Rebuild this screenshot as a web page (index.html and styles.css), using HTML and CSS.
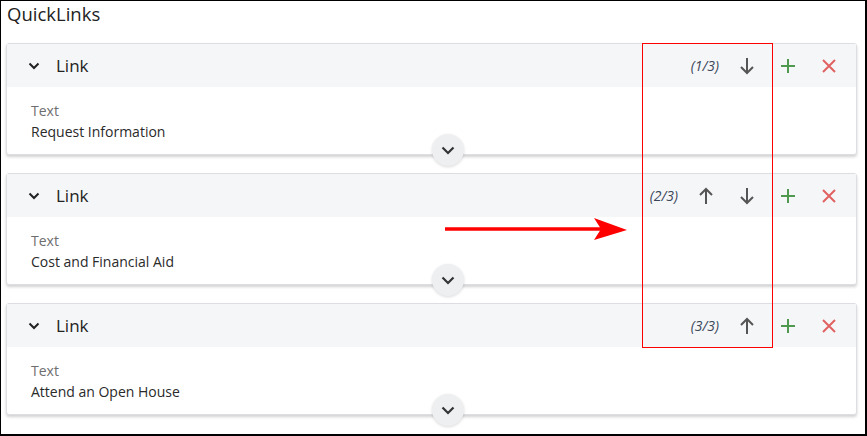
FILE: index.html
```html
<!DOCTYPE html>
<html>
<head>
<title>QuickLinks</title>
<link rel="stylesheet" href="styles.css">
</head>
<body>
<div class="frame">
   <h1 class="title">QuickLinks</h1>

   <div class="card">
      <div class="cardHead">
         <svg class="toggle" width="12" height="8" viewBox="0 0 12 8"><path d="M1.5 1.5 L6 6 L10.5 1.5" fill="none" stroke="#222" stroke-width="2"/></svg>
         <span class="cardName">Link</span>
         <span class="counter">(1/3)</span>
         <span class="btn"><svg width="16" height="18" viewBox="0 0 16 18"><path d="M8 1 V16 M2 10 L8 16 L14 10" fill="none" stroke="#555" stroke-width="2"/></svg></span>
         <span class="btn"><svg width="16" height="16" viewBox="0 0 16 16"><path d="M8 1 V15 M1 8 H15" fill="none" stroke="#4f9a4f" stroke-width="2"/></svg></span>
         <span class="btn"><svg width="16" height="16" viewBox="0 0 16 16"><path d="M2 2 L14 14 M14 2 L2 14" fill="none" stroke="#e06262" stroke-width="2"/></svg></span>
      </div>
      <div class="cardBody">
         <div class="fieldName">Text</div>
         <div class="fieldValue">Request Information</div>
      </div>
      <span class="expand"><svg width="14" height="9" viewBox="0 0 14 9"><path d="M1.5 1.5 L7 7 L12.5 1.5" fill="none" stroke="#333" stroke-width="2.2"/></svg></span>
   </div>

   <div class="card">
      <div class="cardHead">
         <svg class="toggle" width="12" height="8" viewBox="0 0 12 8"><path d="M1.5 1.5 L6 6 L10.5 1.5" fill="none" stroke="#222" stroke-width="2"/></svg>
         <span class="cardName">Link</span>
         <span class="counter">(2/3)</span>
         <span class="btn"><svg width="16" height="18" viewBox="0 0 16 18"><path d="M8 17 V2 M2 8 L8 2 L14 8" fill="none" stroke="#555" stroke-width="2"/></svg></span>
         <span class="btn"><svg width="16" height="18" viewBox="0 0 16 18"><path d="M8 1 V16 M2 10 L8 16 L14 10" fill="none" stroke="#555" stroke-width="2"/></svg></span>
         <span class="btn"><svg width="16" height="16" viewBox="0 0 16 16"><path d="M8 1 V15 M1 8 H15" fill="none" stroke="#4f9a4f" stroke-width="2"/></svg></span>
         <span class="btn"><svg width="16" height="16" viewBox="0 0 16 16"><path d="M2 2 L14 14 M14 2 L2 14" fill="none" stroke="#e06262" stroke-width="2"/></svg></span>
      </div>
      <div class="cardBody">
         <div class="fieldName">Text</div>
         <div class="fieldValue">Cost and Financial Aid</div>
      </div>
      <span class="expand"><svg width="14" height="9" viewBox="0 0 14 9"><path d="M1.5 1.5 L7 7 L12.5 1.5" fill="none" stroke="#333" stroke-width="2.2"/></svg></span>
   </div>

   <div class="card">
      <div class="cardHead">
         <svg class="toggle" width="12" height="8" viewBox="0 0 12 8"><path d="M1.5 1.5 L6 6 L10.5 1.5" fill="none" stroke="#222" stroke-width="2"/></svg>
         <span class="cardName">Link</span>
         <span class="counter">(3/3)</span>
         <span class="btn"><svg width="16" height="18" viewBox="0 0 16 18"><path d="M8 17 V2 M2 8 L8 2 L14 8" fill="none" stroke="#555" stroke-width="2"/></svg></span>
         <span class="btn"><svg width="16" height="16" viewBox="0 0 16 16"><path d="M8 1 V15 M1 8 H15" fill="none" stroke="#4f9a4f" stroke-width="2"/></svg></span>
         <span class="btn"><svg width="16" height="16" viewBox="0 0 16 16"><path d="M2 2 L14 14 M14 2 L2 14" fill="none" stroke="#e06262" stroke-width="2"/></svg></span>
      </div>
      <div class="cardBody">
         <div class="fieldName">Text</div>
         <div class="fieldValue">Attend an Open House</div>
      </div>
      <span class="expand"><svg width="14" height="9" viewBox="0 0 14 9"><path d="M1.5 1.5 L7 7 L12.5 1.5" fill="none" stroke="#333" stroke-width="2.2"/></svg></span>
   </div>

   <!-- annotation -->
   <div class="markBox"></div>
   <svg class="markArrow" width="184" height="26" viewBox="0 0 184 26">
      <path d="M0 13 H160" stroke="#ff0000" stroke-width="3.5"/>
      <polygon points="149,2 182,14 149,24 156,13" fill="#ff0000"/>
   </svg>
</div>
</body>
</html>
```

FILE: styles.css
```css
body
{
    margin: 0;
    font-family: "Open Sans", "DejaVu Sans", sans-serif;
    color: #222;
}

.frame
{
    position: relative;
    box-sizing: border-box;
    width: 867px;
    height: 436px;
    border: 1px solid #000;
    border-right-width: 2px;
    border-bottom-width: 2px;
    padding: 0 8px 0 5px;
    overflow: hidden;
}

.title
{
    margin: 0 0 16px 1px;
    font-size: 18.5px;
    font-weight: normal;
    line-height: 26px;
    color: #222;
}

.card
{
    position: relative;
    border: 1px solid #dcdee2;
    border-radius: 3px;
    box-shadow: 0 2px 3px rgba(0,0,0,0.18);
    margin-bottom: 18px;
    background: #fff;
}

.cardHead
{
    display: flex;
    align-items: center;
    height: 43px;
    padding: 0 7px 0 21px;
    background: #f5f6f8;
}

.toggle
{
    margin-right: 16px;
}

.cardName
{
    font-size: 17px;
    flex: 1;
}

.counter
{
    font-size: 14px;
    font-style: italic;
    color: #3a4658;
    margin-right: 7px;
}

.btn
{
    display: flex;
    justify-content: center;
    align-items: center;
    width: 41px;
    height: 30px;
}

.cardBody
{
    padding: 13px 24px 12px 24px;
    font-size: 14px;
    line-height: 21px;
}

.fieldName
{
    color: #6e6e6e;
}

.fieldValue
{
    color: #2a2a2a;
}

.expand
{
    position: absolute;
    left: 425px;
    bottom: -12px;
    width: 32px;
    height: 32px;
    border-radius: 50%;
    background: #eeeff1;
    box-shadow: 0 1px 3px rgba(0,0,0,0.15);
    display: flex;
    justify-content: center;
    align-items: center;
}

.markBox
{
    position: absolute;
    left: 641px;
    top: 42px;
    width: 129px;
    height: 303px;
    border: 1px solid #ff0000;
}

.markArrow
{
    position: absolute;
    left: 444px;
    top: 215px;
}
```
